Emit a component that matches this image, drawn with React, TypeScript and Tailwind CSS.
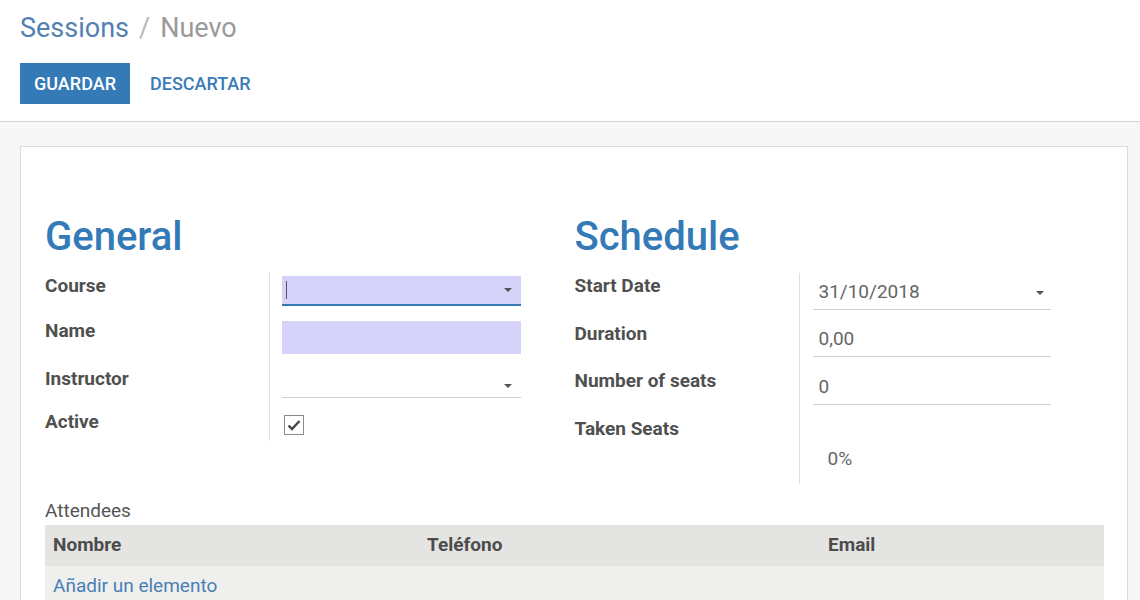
import React from 'react'

function Caret() {
  return (
    <svg width="10" height="6" viewBox="0 0 10 6" className="shrink-0">
      <path d="M1 1h8L5 5z" fill="#555" />
    </svg>
  )
}

function Label({ children, className = '' }: { children: React.ReactNode; className?: string }) {
  return <div className={`text-[19px] font-bold text-[#505050] leading-5 ${className}`}>{children}</div>
}

export default function App() {
  return (
    <div className="h-[600px] overflow-hidden bg-[#f7f7f7] font-['Roboto',sans-serif]">
      {/* control panel */}
      <div className="h-[122px] bg-white border-b border-[#d4d4d4] px-5 pt-[12px]">
        <div className="text-[27px] leading-8 flex gap-[10px]">
          <span className="text-[#5281b2]">Sessions</span>
          <span className="text-[#b8b8b8]">/</span>
          <span className="text-[#9a9a9a]">Nuevo</span>
        </div>
        <div className="mt-[19px] flex items-center gap-5">
          <button className="h-[41px] w-[110px] bg-[#337ab7] text-white text-[18px] font-medium uppercase">Guardar</button>
          <button className="text-[#3b7bb9] text-[18px] font-medium uppercase">Descartar</button>
        </div>
      </div>

      {/* sheet */}
      <div className="ml-5 mt-6 w-[1108px] h-[600px] bg-white border border-[#dcdcdc] px-6 pt-[66px]">
        <div className="grid grid-cols-2 gap-[25px] pr-[24px]">
          {/* General */}
          <div>
            <h1 className="text-[40px] font-medium leading-[48px] text-[#337ab7] mb-[12px]">General</h1>
            <div className="grid grid-cols-[224px_252px]">
              <Label className="h-[44px] pt-[3px]">Course</Label>
              <div className="border-l border-[#dedede] pl-[12px] pt-[3px]">
                <div className="h-[30px] bg-[#d6d3fb] border-b-2 border-[#337ab7] flex items-center justify-between px-1 pr-[8px]">
                  <span className="w-px h-[18px] bg-[#555]" />
                  <Caret />
                </div>
              </div>
              <Label className="h-[46px] pt-[4px]">Name</Label>
              <div className="border-l border-[#dedede] pl-[12px] pt-[4px]">
                <div className="h-[33px] bg-[#d6d3fb]" />
              </div>
              <Label className="h-[46px] pt-[6px]">Instructor</Label>
              <div className="border-l border-[#dedede] pl-[12px] pt-[8px]">
                <div className="h-[27px] border-b border-[#cfcfcf] flex items-center justify-end pr-[8px] pt-[3px]">
                  <Caret />
                </div>
              </div>
              <Label className="h-[32px] pt-[3px]">Active</Label>
              <div className="border-l border-[#dedede] pl-[14px] pt-[6px]">
                <div className="w-[20px] h-[20px] border border-[#8a8a8a] flex items-center justify-center">
                  <svg width="14" height="12" viewBox="0 0 14 12">
                    <path d="M1.5 6.5l3.5 3.5 7.5-8" fill="none" stroke="#444" strokeWidth="2.4" />
                  </svg>
                </div>
              </div>
            </div>
          </div>

          {/* Schedule */}
          <div>
            <h1 className="text-[40px] font-medium leading-[48px] text-[#337ab7] mb-[12px]">Schedule</h1>
            <div className="grid grid-cols-[224px_252px]">
              <Label className="h-[48px] pt-[3px]">Start Date</Label>
              <div className="border-l border-[#dedede] pl-[13px] pt-[3px]">
                <div className="h-[34px] border-b border-[#cfcfcf] flex items-center justify-between pl-[6px] pr-[6px] text-[19px] text-[#666]">
                  <span>31/10/2018</span>
                  <Caret />
                </div>
              </div>
              <Label className="h-[48px] pt-[3px]">Duration</Label>
              <div className="border-l border-[#dedede] pl-[13px] pt-[2px]">
                <div className="h-[34px] border-b border-[#cfcfcf] flex items-center pl-[6px] text-[19px] text-[#666]">0,00</div>
              </div>
              <Label className="h-[48px] pt-[2px]">Number of seats</Label>
              <div className="border-l border-[#dedede] pl-[13px] pt-[2px]">
                <div className="h-[34px] border-b border-[#cfcfcf] flex items-center pl-[6px] text-[19px] text-[#666]">0</div>
              </div>
              <Label className="h-[67px] pt-[2px]">Taken Seats</Label>
              <div className="border-l border-[#dedede] pl-[28px] pt-[32px] text-[19px] text-[#666] leading-5">0%</div>
            </div>
          </div>
        </div>

        {/* Attendees */}
        <div className="mt-[17px] text-[19px] text-[#555] leading-5">Attendees</div>
        <div className="mt-[4px] w-[1059px]">
          <div className="grid grid-cols-[374px_401px_1fr] h-[41px] items-center bg-[#e4e4e2] text-[19px] font-bold text-[#4c4c4c]">
            <span className="pl-2">Nombre</span>
            <span className="pl-2">Teléfono</span>
            <span className="pl-2">Email</span>
          </div>
          <div className="h-[40px] bg-[#efefee] flex items-center pl-2 text-[19px] text-[#4a7fb5]">Añadir un elemento</div>
        </div>
      </div>
    </div>
  )
}
